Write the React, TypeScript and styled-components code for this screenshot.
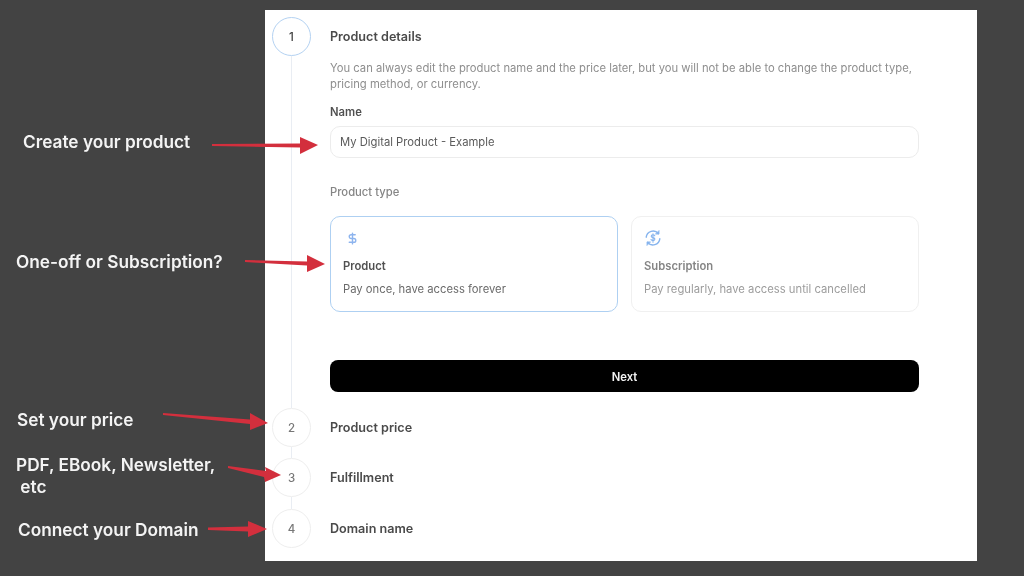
import React from 'react'
import styled, { createGlobalStyle } from 'styled-components'
import { DollarSign } from 'lucide-react'

const GlobalStyle = createGlobalStyle`
  html, body {
    margin: 0;
    padding: 0;
    background: #434343;
  }
  body {
    font-family: Inter, "Liberation Sans", sans-serif;
  }
`

const Page = styled.div`
  position: relative;
  width: 1024px;
  height: 576px;
  overflow: hidden;
  background: #434343;
  padding: 10px 47px 15px 265px;
  box-sizing: border-box;
  filter: blur(0.3px);
`

const Panel = styled.main`
  height: 551px;
  background: #fff;
  padding: 7px 58px 0 7px;
  box-sizing: border-box;
  display: flex;
  flex-direction: column;
`

const Step = styled.section<{ $height: number }>`
  display: flex;
  gap: 19px;
  height: ${(p) => p.$height}px;
  flex: none;
`

const Rail = styled.div`
  width: 39px;
  display: flex;
  flex-direction: column;
  align-items: center;
  flex: none;
`

const Circle = styled.div<{ $active?: boolean }>`
  width: 39px;
  height: 39px;
  box-sizing: border-box;
  flex: none;
  border-radius: 50%;
  border: 1px solid ${(p) => (p.$active ? '#b4d2f2' : '#eeeeee')};
  display: flex;
  align-items: center;
  justify-content: center;
  font-size: 11.5px;
  font-weight: 500;
  color: ${(p) => (p.$active ? '#444' : '#777')};
`

const Line = styled.div`
  flex: 1;
  width: 1px;
  background: #e9edf3;
`

const Body = styled.div`
  flex: 1;
  min-width: 0;
`

const StepTitle = styled.h2`
  margin: 0;
  height: 39px;
  line-height: 39px;
  font-size: 12.6px;
  font-weight: 600;
  color: #4a4a4a;
`

const Description = styled.p`
  margin: 4px 0 0;
  font-size: 11.25px;
  line-height: 16px;
  color: #8e8e8e;
`

const FieldLabel = styled.label`
  display: block;
  margin-top: 12px;
  font-size: 11.25px;
  line-height: 16px;
  font-weight: 600;
  color: #505050;
`

const NameInput = styled.div`
  margin-top: 6px;
  height: 32px;
  box-sizing: border-box;
  border: 1px solid #ececec;
  border-radius: 10px;
  padding: 0 9px;
  display: flex;
  align-items: center;
  font-size: 11.25px;
  color: #5a5a5a;
`

const SectionLabel = styled.div`
  margin-top: 26px;
  font-size: 11.25px;
  line-height: 16px;
  font-weight: 500;
  color: #858585;
`

const CardRow = styled.div`
  margin-top: 16px;
  display: grid;
  grid-template-columns: 288px 288px;
  gap: 13px;
`

const Card = styled.div<{ $selected?: boolean }>`
  height: 96px;
  box-sizing: border-box;
  border: 1px solid ${(p) => (p.$selected ? '#aed0f2' : '#f0f0f0')};
  border-radius: 10px;
  padding: 11px 12px 0;
`

const IconSlot = styled.div<{ $inset?: number }>`
  height: 20px;
  padding-left: ${(p) => p.$inset ?? 0}px;
  display: flex;
  align-items: center;
  color: #8db4ee;
`

const CardTitle = styled.div<{ $muted?: boolean }>`
  margin-top: 10px;
  font-size: 11.25px;
  line-height: 16px;
  font-weight: 600;
  color: ${(p) => (p.$muted ? '#858585' : '#505050')};
`

const CardText = styled.div<{ $muted?: boolean }>`
  margin-top: 7px;
  font-size: 11.25px;
  line-height: 16px;
  color: ${(p) => (p.$muted ? '#9c9c9c' : '#6a6a6a')};
`

const NextButton = styled.button`
  display: block;
  width: 100%;
  margin-top: 48px;
  height: 32px;
  padding: 2px 0 0;
  border: 0;
  border-radius: 8px;
  background: #000;
  color: #f2f2f2;
  font-family: inherit;
  font-size: 11.25px;
  font-weight: 600;
`

const Note = styled.div<{ $x: number; $y: number }>`
  position: absolute;
  left: ${(p) => p.$x}px;
  top: ${(p) => p.$y}px;
  font-size: 17.25px;
  line-height: 22px;
  font-weight: 600;
  color: #f4f4f4;
  white-space: pre;
`

const ArrowLayer = styled.svg`
  position: absolute;
  left: 0;
  top: 0;
  width: 1024px;
  height: 576px;
  pointer-events: none;
`

const arrows = [
  '212,144 300,143.5 300,137 318,145 300,154 300,147.5 212,146',
  '245,260 307,261.5 307,255 325,264 307,272 307,265.5 245,262',
  '163,413 250,419.5 250,413 268,423 250,430 250,424 163,415',
  '228,466 266,471 265,467 281,475 265,482 264,477 228,468',
  '208,527.5 248,526.5 248,521 267,529 248,537 248,531.5 208,530',
]

const SubscriptionIcon = () => (
  <svg width='18' height='18' viewBox='0 0 18 18' fill='none' stroke='#86b4ee' strokeWidth='1.4' strokeLinecap='round'>
    <path d='M2.2 8.2a6.9 6.9 0 0 1 12.2-3.6' />
    <path d='M15.8 9.8a6.9 6.9 0 0 1-12.2 3.6' />
    <path d='M15 1.9v3.2h-3.2z' fill='#86b4ee' strokeWidth='0.8' />
    <path d='M3 16.1v-3.2h3.2z' fill='#86b4ee' strokeWidth='0.8' />
    <path d='M10.8 6.8c-.4-.7-1-1-1.8-1-1 0-1.8.5-1.8 1.4 0 1.9 3.7 1 3.7 2.9 0 .9-.8 1.5-1.9 1.5-.9 0-1.6-.4-2-1.1M9 4.8v8.4' strokeWidth='1.1' />
  </svg>
)

export default function App() {
  return (
    <Page>
      <GlobalStyle />
      <Panel>
        <Step $height={391}>
          <Rail>
            <Circle $active>1</Circle>
            <Line />
          </Rail>
          <Body>
            <StepTitle>Product details</StepTitle>
            <Description>
              You can always edit the product name and the price later, but you will not be able to change the product type,
              pricing method, or currency.
            </Description>
            <FieldLabel>Name</FieldLabel>
            <NameInput>My Digital Product - Example</NameInput>
            <SectionLabel>Product type</SectionLabel>
            <CardRow>
              <Card $selected>
                <IconSlot $inset={3}>
                  <DollarSign size={13} strokeWidth={2.6} />
                </IconSlot>
                <CardTitle>Product</CardTitle>
                <CardText>Pay once, have access forever</CardText>
              </Card>
              <Card>
                <IconSlot>
                  <SubscriptionIcon />
                </IconSlot>
                <CardTitle $muted>Subscription</CardTitle>
                <CardText $muted>Pay regularly, have access until cancelled</CardText>
              </Card>
            </CardRow>
            <NextButton>Next</NextButton>
          </Body>
        </Step>
        <Step $height={50}>
          <Rail>
            <Circle>2</Circle>
            <Line />
          </Rail>
          <Body>
            <StepTitle>Product price</StepTitle>
          </Body>
        </Step>
        <Step $height={51}>
          <Rail>
            <Circle>3</Circle>
            <Line />
          </Rail>
          <Body>
            <StepTitle>Fulfillment</StepTitle>
          </Body>
        </Step>
        <Step $height={40}>
          <Rail>
            <Circle>4</Circle>
          </Rail>
          <Body>
            <StepTitle>Domain name</StepTitle>
          </Body>
        </Step>
      </Panel>

      <Note $x={23} $y={131}>Create your product</Note>
      <Note $x={16} $y={251}>One-off or Subscription?</Note>
      <Note $x={17} $y={409}>Set your price</Note>
      <Note $x={16} $y={454}>{'PDF, EBook, Newsletter,\n etc'}</Note>
      <Note $x={18} $y={519}>Connect your Domain</Note>

      <ArrowLayer viewBox='0 0 1024 576'>
        {arrows.map((points) => (
          <polygon key={points} points={points} fill='#d32f3d' />
        ))}
      </ArrowLayer>
    </Page>
  )
}
